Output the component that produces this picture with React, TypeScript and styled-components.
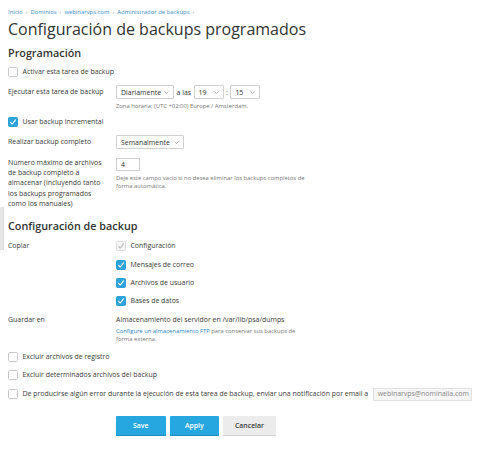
import React from 'react';
import styled, { createGlobalStyle } from 'styled-components';

const GlobalStyle = createGlobalStyle`
    html, body {
        margin: 0;
        padding: 0;
        background: #ffffff;
    }
    body {
        font-family: 'Open Sans', 'DejaVu Sans', sans-serif;
        font-size: 6.95px;
        color: #3b3b3b;
    }
`;

const Page = styled.div`
    position: relative;
    width: 500px;
    height: 460px;
    padding: 7.5px 0 0 8px;
    box-sizing: border-box;
    overflow: hidden;
`;

const SideHandle = styled.div`
    position: absolute;
    left: 0;
    top: 207px;
    width: 3px;
    height: 43px;
    background: #e6e6e6;
    border-right: 1px solid #dcdcdc;
`;

const Breadcrumbs = styled.nav`
    display: flex;
    align-items: center;
    gap: 3px;
    height: 9px;
    font-size: 5.9px;
    line-height: 9px;
`;

const Crumb = styled.a`
    color: #3a8ec8;
    text-decoration: none;
`;

const Sep = styled.span`
    color: #9a9a9a;
`;

const Title = styled.h1`
    margin: 2.5px 0 0;
    font-size: 16px;
    line-height: 20px;
    font-weight: 400;
    color: #333333;
`;

const SectionTitle = styled.h2<{ $mt: number }>`
    margin: ${(p) => p.$mt}px 0 0;
    font-size: 10.8px;
    line-height: 14px;
    font-weight: 600;
    color: #333333;
`;

const CheckRow = styled.div<{ $mt: number }>`
    display: flex;
    align-items: center;
    gap: 4.5px;
    margin-top: ${(p) => p.$mt}px;
    min-height: 10px;
    line-height: 10px;
`;

const Box = styled.span<{ $checked?: boolean; $disabled?: boolean }>`
    flex: none;
    width: 10px;
    height: 10px;
    box-sizing: border-box;
    border-radius: 1.5px;
    display: flex;
    align-items: center;
    justify-content: center;
    border: 1px solid
        ${(p) => (p.$disabled ? '#dedede' : p.$checked ? '#2a9fd8' : '#c8c8c8')};
    background: ${(p) => (p.$disabled ? '#f5f5f5' : p.$checked ? '#2ea3dc' : '#ffffff')};
`;

const Checkbox = ({ checked, disabled }: { checked?: boolean; disabled?: boolean }) => (
    <Box $checked={checked} $disabled={disabled}>
        {checked && (
            <svg width="8" height="8" viewBox="0 0 8 8">
                <path
                    d="M1.6 4.3 L3.3 6 L6.5 1.9"
                    fill="none"
                    stroke={disabled ? '#bdbdbd' : '#ffffff'}
                    strokeWidth="1.1"
                    strokeLinecap="round"
                    strokeLinejoin="round"
                />
            </svg>
        )}
    </Box>
);

const FieldRow = styled.div<{ $mt: number; $align?: string }>`
    display: grid;
    grid-template-columns: 108px 1fr;
    align-items: ${(p) => p.$align || 'center'};
    margin-top: ${(p) => p.$mt}px;
`;

const Label = styled.div`
    line-height: 10.3px;
    padding-right: 11px;
`;

const Controls = styled.div`
    display: flex;
    align-items: center;
    gap: 2px;
`;

const Stack = styled.div<{ $gap?: number }>`
    display: flex;
    flex-direction: column;
    gap: ${(p) => p.$gap ?? 0}px;
`;

const SelectBox = styled.div<{ $w: number }>`
    width: ${(p) => p.$w}px;
    height: 14px;
    box-sizing: border-box;
    border: 1px solid #d2d2d2;
    border-radius: 1px;
    background: #ffffff;
    display: flex;
    align-items: center;
    justify-content: space-between;
    padding: 0 4px 0 4px;
    color: #333333;
`;

const Select = ({ value, width }: { value: string; width: number }) => (
    <SelectBox $w={width}>
        <span>{value}</span>
        <svg width="5" height="3" viewBox="0 0 5 3">
            <path d="M0.5 0.5 L2.5 2.5 L4.5 0.5" fill="none" stroke="#9a9a9a" strokeWidth="0.7" />
        </svg>
    </SelectBox>
);

const Inline = styled.span`
    padding: 0 0.5px;
`;

const Hint = styled.div<{ $mt: number }>`
    margin-top: ${(p) => p.$mt}px;
    font-size: 5.85px;
    line-height: 8.3px;
    color: #777777;
`;

const TextInput = styled.div<{ $w: number; $muted?: boolean }>`
    width: ${(p) => p.$w}px;
    height: 13.5px;
    box-sizing: border-box;
    border: 1px solid ${(p) => (p.$muted ? '#e0e0e0' : '#cfcfcf')};
    background: ${(p) => (p.$muted ? '#f6f6f6' : '#ffffff')};
    color: ${(p) => (p.$muted ? '#8a8a8a' : '#333333')};
    display: flex;
    align-items: center;
    padding: 0 4px;
    white-space: nowrap;
    overflow: hidden;
    flex: none;
`;

const Link = styled.a`
    color: #1f84c6;
    text-decoration: none;
`;

const Buttons = styled.div`
    display: flex;
    gap: 4px;
    margin: 15px 0 0 108px;
`;

const Button = styled.button<{ $primary?: boolean; $w: number }>`
    width: ${(p) => p.$w}px;
    height: 19.5px;
    border: none;
    border-radius: 1px;
    font-family: 'Open Sans', 'DejaVu Sans', sans-serif;
    font-size: 6.9px;
    font-weight: 600;
    padding: 0;
    background: ${(p) => (p.$primary ? '#27a7df' : '#ececec')};
    color: ${(p) => (p.$primary ? '#ffffff' : '#3a3a3a')};
    box-shadow: inset 0 -1px 0 ${(p) => (p.$primary ? '#1e8fc4' : '#d4d4d4')};
`;

const App = () => (
    <>
        <GlobalStyle />
        <Page>
            <SideHandle />
            <Breadcrumbs>
                <Crumb>Inicio</Crumb>
                <Sep>›</Sep>
                <Crumb>Dominios</Crumb>
                <Sep>›</Sep>
                <Crumb>webinarvps.com</Crumb>
                <Sep>›</Sep>
                <Crumb>Administrador de backups</Crumb>
                <Sep>›</Sep>
            </Breadcrumbs>
            <Title>Configuración de backups programados</Title>

            <SectionTitle $mt={7}>Programación</SectionTitle>
            <CheckRow $mt={7}>
                <Checkbox />
                <span>Activar esta tarea de backup</span>
            </CheckRow>

            <FieldRow $mt={8}>
                <Label>Ejecutar esta tarea de backup</Label>
                <Controls>
                    <Select value="Diariamente" width={58} />
                    <Inline>a las</Inline>
                    <Select value="19" width={30} />
                    <Inline>:</Inline>
                    <Select value="15" width={30} />
                </Controls>
            </FieldRow>
            <FieldRow $mt={3}>
                <span />
                <Hint $mt={0}>Zona horaria: (UTC +02:00) Europe / Amsterdam.</Hint>
            </FieldRow>

            <CheckRow $mt={7}>
                <Checkbox checked />
                <span>Usar backup incremental</span>
            </CheckRow>

            <FieldRow $mt={8}>
                <Label>Realizar backup completo</Label>
                <Controls>
                    <Select value="Semanalmente" width={68} />
                </Controls>
            </FieldRow>

            <FieldRow $mt={8.5} $align="start">
                <Label>
                    Número máximo de archivos de backup completo a almacenar (incluyendo tanto los
                    backups programados como los manuales)
                </Label>
                <Stack>
                    <TextInput $w={24}>4</TextInput>
                    <Hint $mt={2.5}>
                        Deje este campo vacío si no desea eliminar los backups completos de
                        <br />
                        forma automática.
                    </Hint>
                </Stack>
            </FieldRow>

            <SectionTitle $mt={10}>Configuración de backup</SectionTitle>

            <FieldRow $mt={8} $align="start">
                <Label>Copiar</Label>
                <Stack $gap={8.3}>
                    <CheckRow $mt={0}>
                        <Checkbox checked disabled />
                        <span>Configuración</span>
                    </CheckRow>
                    <CheckRow $mt={0}>
                        <Checkbox checked />
                        <span>Mensajes de correo</span>
                    </CheckRow>
                    <CheckRow $mt={0}>
                        <Checkbox checked />
                        <span>Archivos de usuario</span>
                    </CheckRow>
                    <CheckRow $mt={0}>
                        <Checkbox checked />
                        <span>Bases de datos</span>
                    </CheckRow>
                </Stack>
            </FieldRow>

            <FieldRow $mt={8.5} $align="start">
                <Label>Guardar en</Label>
                <Stack>
                    <Label>Almacenamiento del servidor en /var/lib/psa/dumps</Label>
                    <Hint $mt={2}>
                        <Link>Configure un almacenamiento FTP</Link> para conservar sus backups de
                        <br />
                        forma externa.
                    </Hint>
                </Stack>
            </FieldRow>

            <CheckRow $mt={8}>
                <Checkbox />
                <span>Excluir archivos de registro</span>
            </CheckRow>
            <CheckRow $mt={8}>
                <Checkbox />
                <span>Excluir determinados archivos del backup</span>
            </CheckRow>
            <CheckRow $mt={8}>
                <Checkbox />
                <span>
                    De producirse algún error durante la ejecución de esta tarea de backup, enviar
                    una notificación por email a
                </span>
                <TextInput $w={99} $muted>
                    webinarvps@nominalia.com
                </TextInput>
            </CheckRow>

            <Buttons>
                <Button $primary $w={49.5}>
                    Save
                </Button>
                <Button $primary $w={49.5}>
                    Apply
                </Button>
                <Button $w={53}>Cancelar</Button>
            </Buttons>
        </Page>
    </>
);

export default App;
